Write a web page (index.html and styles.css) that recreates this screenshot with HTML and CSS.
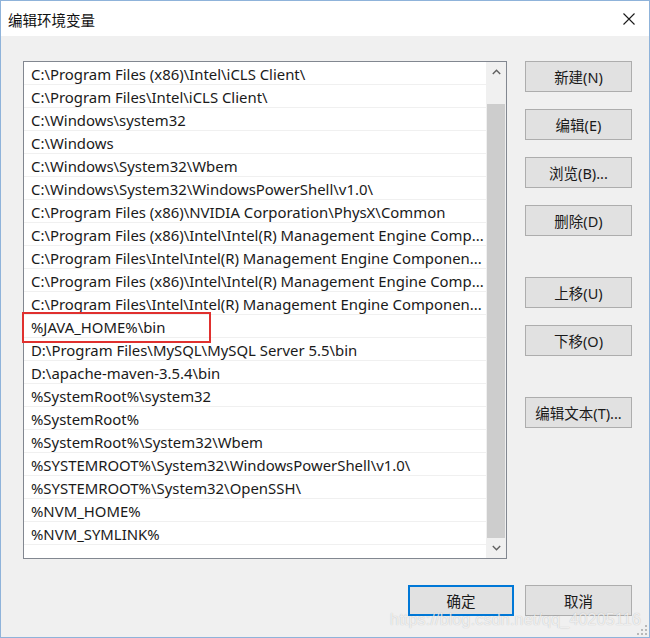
FILE: index.html
```html
<!DOCTYPE html>
<html lang="zh-CN">
<head>
<meta charset="utf-8">
<title>编辑环境变量</title>
<link rel="stylesheet" href="styles.css">
</head>
<body>
<div class="window">
  <div class="titlebar">
    <span class="title">编辑环境变量</span>
    <svg class="close" width="12" height="12" viewBox="0 0 12 12"><path d="M0.5 0.5L11.5 11.5M11.5 0.5L0.5 11.5" stroke="#1a1a1a" stroke-width="1.1" fill="none"/></svg>
  </div>
  <div class="content">
    <div class="main">
      <div class="listbox">
        <div class="rows">
          <div class="row">C:\Program Files (x86)\Intel\iCLS Client\</div>
          <div class="row">C:\Program Files\Intel\iCLS Client\</div>
          <div class="row">C:\Windows\system32</div>
          <div class="row">C:\Windows</div>
          <div class="row">C:\Windows\System32\Wbem</div>
          <div class="row">C:\Windows\System32\WindowsPowerShell\v1.0\</div>
          <div class="row">C:\Program Files (x86)\NVIDIA Corporation\PhysX\Common</div>
          <div class="row">C:\Program Files (x86)\Intel\Intel(R) Management Engine Comp...</div>
          <div class="row">C:\Program Files\Intel\Intel(R) Management Engine Componen...</div>
          <div class="row">C:\Program Files (x86)\Intel\Intel(R) Management Engine Comp...</div>
          <div class="row">C:\Program Files\Intel\Intel(R) Management Engine Componen...</div>
          <div class="row">%JAVA_HOME%\bin</div>
          <div class="row">D:\Program Files\MySQL\MySQL Server 5.5\bin</div>
          <div class="row">D:\apache-maven-3.5.4\bin</div>
          <div class="row">%SystemRoot%\system32</div>
          <div class="row">%SystemRoot%</div>
          <div class="row">%SystemRoot%\System32\Wbem</div>
          <div class="row">%SYSTEMROOT%\System32\WindowsPowerShell\v1.0\</div>
          <div class="row">%SYSTEMROOT%\System32\OpenSSH\</div>
          <div class="row">%NVM_HOME%</div>
          <div class="row">%NVM_SYMLINK%</div>
          <div class="row"></div>
        </div>
        <div class="scrollbar">
          <div class="arrow">
            <svg width="9" height="6" viewBox="0 0 9 6"><path d="M0.8 5L4.5 1.3L8.2 5" stroke="#606060" stroke-width="1.4" fill="none"/></svg>
          </div>
          <div class="track"><div class="thumb"></div></div>
          <div class="arrow">
            <svg width="9" height="6" viewBox="0 0 9 6"><path d="M0.8 1L4.5 4.7L8.2 1" stroke="#606060" stroke-width="1.4" fill="none"/></svg>
          </div>
        </div>
        <div class="highlight"></div>
      </div>
      <div class="side">
        <div class="group">
          <button class="btn">新建(N)</button>
          <button class="btn">编辑(E)</button>
          <button class="btn">浏览(B)...</button>
          <button class="btn">删除(D)</button>
        </div>
        <div class="group">
          <button class="btn">上移(U)</button>
          <button class="btn">下移(O)</button>
        </div>
        <div class="group">
          <button class="btn">编辑文本(T)...</button>
        </div>
      </div>
    </div>
    <div class="footer">
      <button class="btn btn-default">确定</button>
      <button class="btn">取消</button>
    </div>
  </div>
  <div class="watermark">https://blog.csdn.net/qq_40205116</div>
  <svg class="grip" width="10" height="10" viewBox="0 0 10 10">
    <rect x="8" y="0" width="2" height="2" fill="#b8b8b8"/>
    <rect x="4" y="4" width="2" height="2" fill="#b8b8b8"/>
    <rect x="8" y="4" width="2" height="2" fill="#b8b8b8"/>
    <rect x="0" y="8" width="2" height="2" fill="#b8b8b8"/>
    <rect x="4" y="8" width="2" height="2" fill="#b8b8b8"/>
    <rect x="8" y="8" width="2" height="2" fill="#b8b8b8"/>
  </svg>
</div>
</body>
</html>
```
FILE: styles.css
```css
* { box-sizing: border-box; }
html, body { margin: 0; padding: 0; }
body {
  width: 650px;
  height: 638px;
  font-family: "Noto Sans", "Noto Sans CJK SC", sans-serif;
  color: #1a1a1a;
  background: #f0f0f0;
}
.window {
  position: relative;
  width: 650px;
  height: 638px;
  border: 1px solid #8fb3da;
  display: flex;
  flex-direction: column;
  background: #f0f0f0;
}
.titlebar {
  height: 35px;
  background: #ffffff;
  display: flex;
  align-items: center;
  justify-content: space-between;
  padding: 0 14px 0 7px;
  flex: none;
}
.title {
  font-family: "Noto Sans CJK SC", sans-serif;
  font-size: 14.5px;
  color: #111;
  margin-top: 1px;
}
.close { display: block; margin-top: 1px; }
.content {
  flex: 1;
  display: flex;
  flex-direction: column;
  padding: 25px 17px 21px 22px;
}
.main {
  display: flex;
  gap: 18px;
}
.listbox {
  position: relative;
  width: 484px;
  height: 498px;
  border: 1px solid #828790;
  background: #ffffff;
  display: flex;
}
.rows {
  flex: 1;
  overflow: hidden;
}
.row {
  height: 23px;
  border-bottom: 1px solid #f0f0f0;
  padding: 1px 0 0 7px;
  font-size: 14.9px;
  line-height: 22px;
  white-space: nowrap;
  overflow: hidden;
  color: #1a1a1a;
}
.scrollbar {
  width: 20px;
  flex: none;
  background: #f0f0f0;
  display: flex;
  flex-direction: column;
}
.arrow {
  height: 20px;
  display: flex;
  align-items: center;
  justify-content: center;
  flex: none;
}
.track {
  flex: 1;
  display: flex;
  flex-direction: column;
  justify-content: flex-end;
  padding: 0 1px;
}
.thumb {
  height: 434px;
  background: #cdcdcd;
}
.highlight {
  position: absolute;
  left: -2px;
  top: 250px;
  width: 189px;
  height: 31px;
  border: 2px solid #e0302e;
}
.side {
  width: 107px;
  display: flex;
  flex-direction: column;
  gap: 41px;
}
.group {
  display: flex;
  flex-direction: column;
  gap: 17px;
}
.btn {
  width: 107px;
  height: 31px;
  background: #e1e1e1;
  border: 1px solid #adadad;
  border-radius: 0;
  font-family: "Noto Sans", "Noto Sans CJK SC", sans-serif;
  font-size: 14.5px;
  color: #1a1a1a;
  padding: 0;
  margin: 0;
}
.footer {
  margin-top: 26px;
  display: flex;
  justify-content: flex-end;
  gap: 11px;
}
.btn-default {
  width: 106px;
  border: 2px solid #0078d7;
}
.watermark {
  position: absolute;
  right: 8px;
  bottom: 8px;
  font-family: "Liberation Sans", sans-serif;
  font-size: 16px;
  color: rgba(255, 255, 255, 0.75);
  text-shadow: 0 0 1px rgba(0, 0, 0, 0.25);
  letter-spacing: 0.2px;
}
.grip {
  position: absolute;
  right: 2px;
  bottom: 2px;
}
```
